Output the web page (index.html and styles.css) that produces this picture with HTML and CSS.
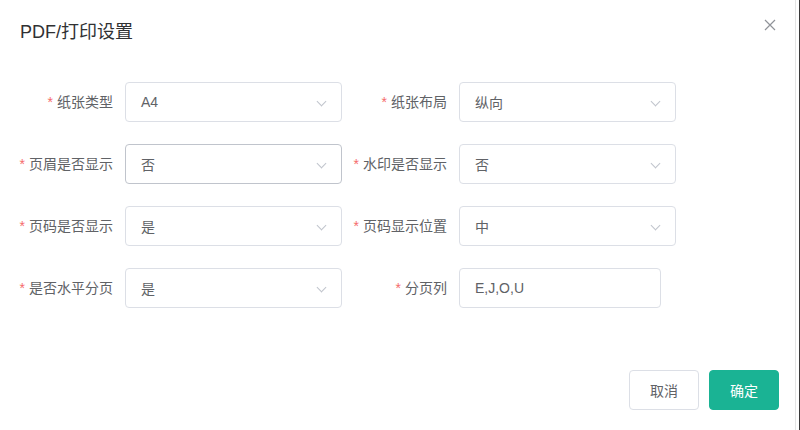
FILE: index.html
```html
<!DOCTYPE html>
<html lang="zh-CN">
<head>
  <meta charset="UTF-8">
  <title>PDF/打印设置</title>
  <link rel="stylesheet" href="styles.css">
</head>
<body>
  <div class="dialog">
    <div class="dialog-header">
      <span class="dialog-title">PDF/打印设置</span>
      <button type="button" class="dialog-close">
        <svg width="12" height="12" viewBox="0 0 12 12"><path d="M1 1L11 11M11 1L1 11" stroke="#909399" stroke-width="1.2" fill="none"/></svg>
      </button>
    </div>

    <div class="dialog-body">
      <div class="form-row">
        <div class="form-item">
          <label class="form-label"><span class="req">*</span>纸张类型</label>
          <div class="select"><span>A4</span><i class="arrow"></i></div>
        </div>
        <div class="form-item">
          <label class="form-label"><span class="req">*</span>纸张布局</label>
          <div class="select"><span>纵向</span><i class="arrow"></i></div>
        </div>
      </div>

      <div class="form-row">
        <div class="form-item">
          <label class="form-label"><span class="req">*</span>页眉是否显示</label>
          <div class="select hover"><span>否</span><i class="arrow"></i></div>
        </div>
        <div class="form-item">
          <label class="form-label"><span class="req">*</span>水印是否显示</label>
          <div class="select"><span>否</span><i class="arrow"></i></div>
        </div>
      </div>

      <div class="form-row">
        <div class="form-item">
          <label class="form-label"><span class="req">*</span>页码是否显示</label>
          <div class="select"><span>是</span><i class="arrow"></i></div>
        </div>
        <div class="form-item">
          <label class="form-label"><span class="req">*</span>页码显示位置</label>
          <div class="select"><span>中</span><i class="arrow"></i></div>
        </div>
      </div>

      <div class="form-row">
        <div class="form-item">
          <label class="form-label"><span class="req">*</span>是否水平分页</label>
          <div class="select"><span>是</span><i class="arrow"></i></div>
        </div>
        <div class="form-item">
          <label class="form-label"><span class="req">*</span>分页列</label>
          <div class="input"><span>E,J,O,U</span></div>
        </div>
      </div>
    </div>

    <div class="dialog-footer">
      <button type="button" class="btn btn-default">取消</button>
      <button type="button" class="btn btn-primary">确定</button>
    </div>
  </div>
</body>
</html>
```

FILE: styles.css
```css
* {
  box-sizing: border-box;
}
body {
  margin: 0;
  background: #fff;
  font-family: "Liberation Sans", "Noto Sans CJK SC", sans-serif;
  color: #606266;
}
.dialog {
  position: relative;
  width: 800px;
  height: 430px;
  border-right: 1px solid #3a3a3a;
  box-shadow: inset -3px 0 0 #fff, inset -4px 0 0 #e4e4e4;
}
.dialog-header {
  padding: 20px 20px 10px;
  height: 54px;
}
.dialog-title {
  font-size: 18px;
  line-height: 24px;
  color: #303133;
}
.dialog-close {
  position: absolute;
  top: 19px;
  right: 23px;
  padding: 0;
  border: none;
  background: none;
  width: 12px;
  height: 12px;
  line-height: 0;
}

.dialog-body {
  padding: 28px 0 0 8px;
}
.form-row {
  display: flex;
  margin-bottom: 22px;
}
.form-item {
  display: flex;
  align-items: center;
}
.form-label {
  width: 117px;
  padding-right: 12px;
  text-align: right;
  font-size: 14px;
  line-height: 40px;
  color: #606266;
}
.req {
  color: #f56c6c;
  margin-right: 4px;
}

.select,
.input {
  position: relative;
  width: 217px;
  height: 40px;
  border: 1px solid #dcdfe6;
  border-radius: 4px;
  padding: 0 15px;
  display: flex;
  align-items: center;
  font-size: 14px;
  color: #606266;
}
.select.hover {
  border-color: #c0c4cc;
}
.input {
  width: 202px;
}
.arrow {
  position: absolute;
  right: 16px;
  top: 15px;
  width: 7px;
  height: 7px;
  border-right: 1px solid #c0c4cc;
  border-bottom: 1px solid #c0c4cc;
  transform: rotate(45deg);
}

.dialog-footer {
  display: flex;
  justify-content: flex-end;
  gap: 10px;
  padding: 0 20px 0 0;
  margin-top: 62px;
}
.btn {
  width: 70px;
  height: 40px;
  border-radius: 4px;
  font-size: 14px;
  font-family: "Liberation Sans", "Noto Sans CJK SC", sans-serif;
  cursor: pointer;
}
.btn-default {
  background: #fff;
  border: 1px solid #dcdfe6;
  color: #606266;
}
.btn-primary {
  background: #1ab394;
  border: 1px solid #1ab394;
  color: #fff;
}
```
